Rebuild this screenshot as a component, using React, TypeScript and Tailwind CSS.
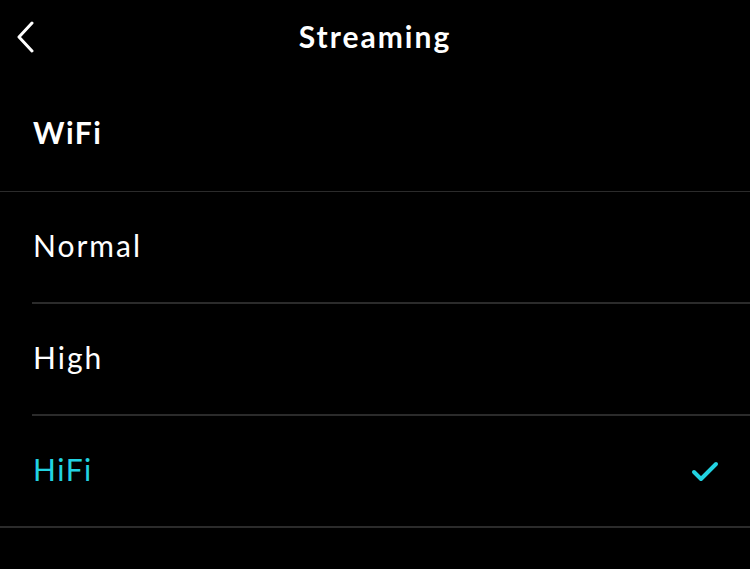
const OPTIONS = ["Normal", "High", "HiFi"];
const SELECTED = "HiFi";

function Chevron() {
  return (
    <svg width="20" height="32" viewBox="0 0 20 32" fill="none">
      <path d="M16 2 L3 16 L16 30" stroke="white" strokeWidth="3" strokeLinecap="round" strokeLinejoin="round" />
    </svg>
  );
}

function Check() {
  return (
    <svg width="28" height="22" viewBox="0 0 28 22" fill="none">
      <path d="M3 12 L10 19 L25 4" stroke="#22d3e2" strokeWidth="4" strokeLinecap="round" strokeLinejoin="round" />
    </svg>
  );
}

export default function App() {
  return (
    <div className="h-[569px] w-[750px] overflow-hidden bg-black text-white [font-family:Lato,'Noto_Sans',sans-serif]">
      {/* Top bar */}
      <header className="relative flex h-[75px] items-center justify-center pb-[2px]">
        <button className="absolute left-[16px] top-[21px]">
          <Chevron />
        </button>
        <h1 className="text-[30px] font-bold tracking-[2px]">Streaming</h1>
      </header>

      {/* Section title */}
      <div className="flex h-[117px] items-center border-b border-[#2b2b2b] pb-[2px] pl-[33px]">
        <h2 className="text-[30px] font-bold tracking-[1.5px]">WiFi</h2>
      </div>

      {/* Options */}
      <ul>
        {OPTIONS.map((opt, i) => {
          const last = i === OPTIONS.length - 1;
          const active = opt === SELECTED;
          return (
            <li
              key={opt}
              className={
                last
                  ? "flex h-[112px] items-center justify-between border-b-2 border-[#2b2b2b] pb-[4px] pl-[33px] pr-[31px]"
                  : "ml-[32px] flex h-[112px] items-center justify-between border-b-2 border-[#2b2b2b] pb-[4px] pl-[1px] pr-[31px]"
              }
            >
              <span
                className={
                  active
                    ? "text-[30px] tracking-[1.5px] text-[#22d3e2]"
                    : "text-[30px] tracking-[2px] text-white"
                }
              >
                {opt}
              </span>
              {active && (
                <span className="pt-[4px]">
                  <Check />
                </span>
              )}
            </li>
          );
        })}
      </ul>
    </div>
  );
}
